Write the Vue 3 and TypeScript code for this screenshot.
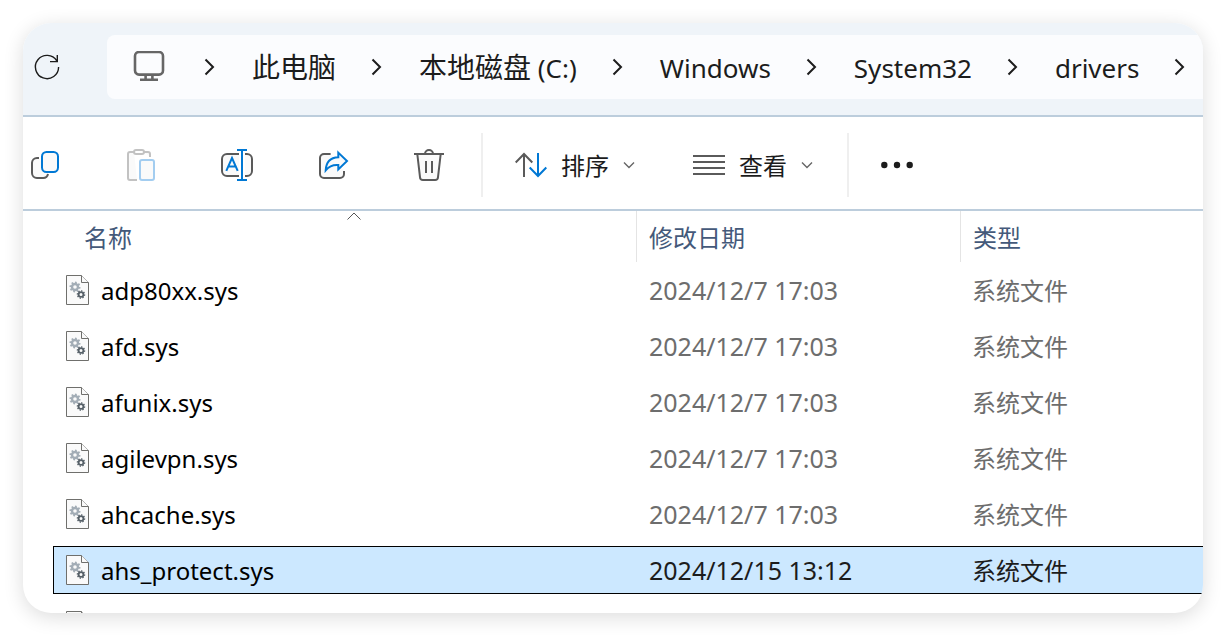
<script setup lang="ts">
import { ref } from 'vue'

interface Crumb {
  cjk?: string
  latin?: string
}

interface FileRow {
  name: string
  date: string
  type: string
}

const crumbs: Crumb[] = [
  { cjk: '此电脑' },
  { cjk: '本地磁盘', latin: ' (C:)' },
  { latin: 'Windows' },
  { latin: 'System32' },
  { latin: 'drivers' },
]

const files: FileRow[] = [
  { name: 'adp80xx.sys', date: '2024/12/7 17:03', type: '系统文件' },
  { name: 'afd.sys', date: '2024/12/7 17:03', type: '系统文件' },
  { name: 'afunix.sys', date: '2024/12/7 17:03', type: '系统文件' },
  { name: 'agilevpn.sys', date: '2024/12/7 17:03', type: '系统文件' },
  { name: 'ahcache.sys', date: '2024/12/7 17:03', type: '系统文件' },
  { name: 'ahs_protect.sys', date: '2024/12/15 13:12', type: '系统文件' },
  { name: '', date: '', type: '' },
]

const selected = ref<number>(5)
</script>

<template>
  <main class="window">
    <header class="topbar">
      <button class="refresh" type="button" aria-label="刷新">
        <svg class="icon" viewBox="0 0 32 32">
          <path class="ink thin" d="M27.6 16A11.6 11.6 0 1 1 25.8 9.8M26.3 4v6.6H19" />
        </svg>
      </button>
      <nav class="address" aria-label="路径">
        <button class="home" type="button" aria-label="位置">
          <svg class="icon" viewBox="0 0 32 32">
            <rect class="mid heavy" x="2" y="1" width="28" height="22.6" rx="4" />
            <path class="mid heavy" d="M12.6 24v5M19.4 24v5M7 28.8h18" />
          </svg>
        </button>
        <template v-for="(crumb, i) in crumbs" :key="i">
          <svg class="sep" viewBox="0 0 12 18"><path class="ink" d="M1.5 1.5 9 9l-7.5 7.5" /></svg>
          <button class="crumb" type="button">{{ crumb.cjk }}<span v-if="crumb.latin" class="latin">{{ crumb.latin }}</span></button>
        </template>
        <svg class="sep" viewBox="0 0 12 18"><path class="ink" d="M1.5 1.5 9 9l-7.5 7.5" /></svg>
      </nav>
    </header>

    <div class="toolbar" role="toolbar" aria-label="命令">
      <div class="actions">
        <button type="button" aria-label="复制">
          <svg class="icon" viewBox="0 0 32 32">
            <path class="gray soft" d="M10 9H8a5 5 0 0 0-5 5v10a5 5 0 0 0 5 5h6a5 5 0 0 0 5-4" />
            <rect class="blue soft" x="13" y="3" width="16" height="20" rx="4.5" />
          </svg>
        </button>
        <button type="button" aria-label="粘贴" disabled>
          <svg class="icon" viewBox="0 0 32 32">
            <path class="pale soft" d="M9 3H5a2 2 0 0 0-2 2v24a2 2 0 0 0 2 2h7M19 3h4a2 2 0 0 1 2 2v3" />
            <rect class="pale" x="9" y="1" width="10" height="4" rx="2" />
            <rect class="sky soft" x="15" y="11" width="14" height="20" rx="2" />
          </svg>
        </button>
        <button type="button" aria-label="重命名">
          <svg class="icon" viewBox="0 0 32 32">
            <path class="gray soft" d="M18 5H6a5 5 0 0 0-5 5v12a5 5 0 0 0 5 5h12" />
            <path class="gray soft" d="M24 5h2a5 5 0 0 1 5 5v12a5 5 0 0 1-5 5h-2" />
            <path class="blue" d="M16 1h10M21 1v30M16 31h10M5.3 21.8 11 9l5.7 12.8M7.3 17.5h7.4" />
          </svg>
        </button>
        <button type="button" aria-label="共享">
          <svg class="icon" viewBox="0 0 32 32">
            <path class="gray soft" d="M13.6 5H7a4 4 0 0 0-4 4v16a4 4 0 0 0 4 4h16a4 4 0 0 0 4-4v-3" />
            <path class="blue soft" d="M21.3 3.6 30 12l-8.7 8.4V16C16 15.6 12 17.2 8.7 21.3 9 14 13 8.6 21.3 8.2Z" />
          </svg>
        </button>
        <button type="button" aria-label="删除">
          <svg class="icon" viewBox="0 0 32 32">
            <path class="gray soft" d="M4.3 5 7 28.2a3 3 0 0 0 3 2.8h12a3 3 0 0 0 3-2.8L27.7 5" />
            <path class="gray" d="M1 5h30M12 5a4 4 0 0 1 8 0M13 12v12M19 12v12" />
          </svg>
        </button>
      </div>
      <span class="divider wide"></span>
      <div class="menus">
        <button class="menu" type="button">
          <svg class="icon" viewBox="0 0 32 32">
            <path class="gray" d="M9 28V5M.7 13.5 9 5l8.3 8.5" />
            <path class="blue" d="M23 4v23M14.7 18.5 23 27l8.3-8.5" />
          </svg>
          <span>排序</span>
          <svg class="drop" viewBox="0 0 12 8"><path class="mid thin" d="M1 1.5 6 6.5l5-5" /></svg>
        </button>
        <button class="menu" type="button">
          <svg class="icon" viewBox="0 0 32 32">
            <path class="gray" d="M0 7h32M0 13h32M0 19h32M0 25h32" />
          </svg>
          <span>查看</span>
          <svg class="drop" viewBox="0 0 12 8"><path class="mid thin" d="M1 1.5 6 6.5l5-5" /></svg>
        </button>
      </div>
      <span class="divider"></span>
      <button class="more" type="button" aria-label="更多">
        <svg class="icon" viewBox="0 0 32 32">
          <circle cx="3.3" cy="16" r="3.2" />
          <circle cx="16" cy="16" r="3.2" />
          <circle cx="28.7" cy="16" r="3.2" />
        </svg>
      </button>
    </div>

    <table class="files">
      <thead>
        <tr>
          <th class="first" scope="col" aria-sort="ascending">
            <button type="button">名称</button>
            <svg class="caret" viewBox="0 0 14 8"><path d="M.5 7.5 7 1l6.5 6.5" /></svg>
          </th>
          <th scope="col"><button type="button">修改日期</button></th>
          <th scope="col"><button type="button">类型</button></th>
        </tr>
      </thead>
      <tbody>
        <tr v-for="(file, i) in files" :key="i" :class="{ selected: i === selected }" @click="selected = i">
          <td class="name">
            <svg class="page" viewBox="0 0 24 30">
              <path class="sheet" d="M.5.5h15l7 7v22H.5Z" />
              <path class="sheet" d="M15.5.5v7h7" />
              <g class="gear-large">
                <circle cx="9" cy="12" r="3" stroke-width="2.4" />
                <circle cx="9" cy="12" r="4.6" stroke-width="1.8" pathLength="16" stroke-dasharray="1 1" />
              </g>
              <g class="gear-small">
                <circle cx="15" cy="19.5" r="2.4" stroke-width="1.8" />
                <circle cx="15" cy="19.5" r="3.6" stroke-width="1.4" pathLength="16" stroke-dasharray="1 1" />
              </g>
            </svg>
            <span>{{ file.name }}</span>
          </td>
          <td class="date">{{ file.date }}</td>
          <td class="type">{{ file.type }}</td>
        </tr>
      </tbody>
    </table>
  </main>
</template>

<style>
body {
  margin: 0;
  background: #fff;
}
</style>

<style scoped>
.window {
  box-sizing: border-box;
  height: calc(100vh - 46px);
  margin: 23px;
  display: flex;
  flex-direction: column;
  overflow: hidden;
  background: #fff;
  border-radius: 28px;
  box-shadow: 0 4px 20px rgba(0, 0, 0, 0.14);
  font-family: "Noto Sans", "Noto Sans CJK SC", sans-serif;
  font-size: 24px;
  color: #1c1c1c;
}

button {
  margin: 0;
  padding: 0;
  border: 0;
  background: none;
  font: inherit;
  color: inherit;
  text-align: left;
}

svg {
  display: block;
  flex: none;
  fill: none;
}

.icon {
  width: 32px;
  height: 32px;
}

path,
rect {
  stroke-width: 2;
}

.ink { stroke: #1c1c1c; }
.mid { stroke: #666; }
.gray { stroke: #5a5a5a; }
.blue { stroke: #0078d4; }
.pale { stroke: #c2c2c2; }
.sky { stroke: #a3cdf0; }
.soft { fill: #fafafa; }
.thin { stroke-width: 1.4; }
.heavy { stroke-width: 2.6; }

.topbar {
  flex: none;
  display: flex;
  padding: 12px 0 16px 8px;
  background: #eff4f9;
  border-bottom: 2px solid #bccddc;
}

.refresh {
  width: 76px;
}

.address {
  flex: 1;
  min-width: 0;
  height: 64px;
  display: flex;
  align-items: center;
  overflow: hidden;
  padding-left: 26px;
  background: #fbfcfe;
  border-radius: 8px 0 0 8px;
  font-size: 28px;
}

.home {
  width: 36px;
  flex: none;
}

.sep {
  width: 12px;
  height: 18px;
  margin: 0 36px 0 35px;
}

.crumb {
  flex: none;
  line-height: 40px;
  white-space: pre;
}

.latin {
  font-size: 26px;
}

.toolbar {
  flex: none;
  display: flex;
  align-items: center;
  height: 64px;
  padding: 16px 0 12px 6px;
  border-bottom: 2px solid #bccddc;
}

.actions {
  display: flex;
  gap: 64px;
}

.divider {
  width: 2px;
  height: 64px;
  margin: 0 32px 0 34px;
  background: #efefef;
}

.divider.wide {
  margin-left: 36px;
}

.menus {
  display: flex;
  gap: 58px;
}

.menu {
  display: flex;
  align-items: center;
  gap: 14px;
  line-height: 36px;
}

.menu span {
  padding-top: 2px;
}

.drop {
  width: 12px;
  height: 8px;
}

.more {
  fill: #1c1c1c;
}

.more svg {
  fill: inherit;
}

.files {
  display: block;
  margin-left: 30px;
}

thead,
tbody {
  display: block;
}

tr {
  box-sizing: border-box;
  display: grid;
  grid-template-columns: 583fr 324fr 243fr;
}

th {
  padding: 0 0 0 12px;
  border-left: 1px solid #e4e4e4;
  font-weight: 400;
  text-align: left;
  color: #44597a;
}

th button {
  height: 51px;
  padding-top: 2px;
  line-height: 49px;
}

th.first {
  position: relative;
  margin-left: 19px;
  border-left: 0;
}

.caret {
  position: absolute;
  top: 1px;
  left: 50%;
  width: 14px;
  height: 8px;
  margin-left: -7px;
}

.caret path {
  stroke: #555;
  stroke-width: 1;
}

tbody {
  padding-top: 4px;
}

tbody tr {
  height: 48px;
  margin-bottom: 8px;
  align-items: center;
}

tbody tr.selected {
  background: #cce8ff;
  box-shadow: inset 1px 1px #000, inset 0 -1px #000;
}

td {
  padding: 2px 0 0 12px;
  line-height: 36px;
  white-space: nowrap;
  color: #6d6d6d;
}

.name {
  display: flex;
  align-items: center;
  gap: 11px;
  padding: 0 0 0 13px;
  color: #000;
}

.name span {
  padding-top: 2px;
}

.date {
  padding: 0 0 0 13px;
  font-size: 25px;
}

.selected .date,
.selected .type {
  color: #1c1c1c;
}

.page {
  width: 24px;
  height: 30px;
}

.sheet {
  fill: #fafafa;
  stroke: #6f6f6c;
  stroke-width: 1;
}

.gear-large { stroke: #a3adb6; }
.gear-small { stroke: #566068; }
</style>
